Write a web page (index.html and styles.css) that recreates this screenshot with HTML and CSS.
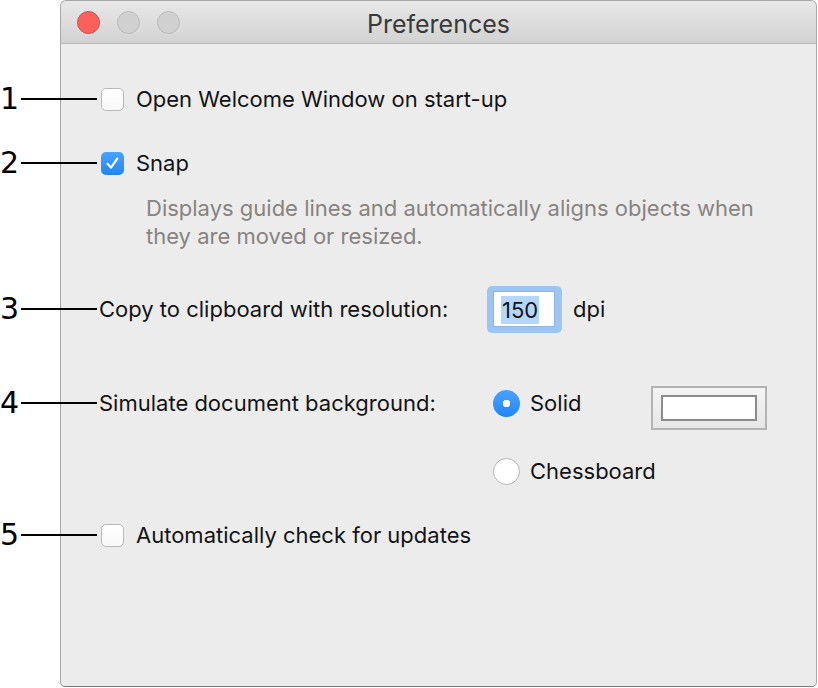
FILE: index.html
```html
<!DOCTYPE html>
<html lang="en">
<head>
  <meta charset="UTF-8">
  <title>Preferences</title>
  <link rel="stylesheet" href="styles.css">
</head>
<body>
  <div class="window">
    <div class="titlebar">
      <div class="lights">
        <span class="light close"></span>
        <span class="light"></span>
        <span class="light"></span>
      </div>
      <div class="title">Preferences</div>
    </div>

    <div class="content">
      <div class="row row-1">
        <div class="callout"><span class="num">1</span><span class="lead"></span></div>
        <span class="checkbox"></span>
        <span class="label">Open Welcome Window on start-up</span>
      </div>

      <div class="row row-2">
        <div class="callout"><span class="num">2</span><span class="lead"></span></div>
        <span class="checkbox checked">
          <svg width="23" height="23" viewBox="0 0 23 23">
            <path d="M6.5 11.8 L10 15.6 L16.3 6.6" fill="none" stroke="#fff" stroke-width="2.2" stroke-linecap="round" stroke-linejoin="round"/>
          </svg>
        </span>
        <span class="label">Snap</span>
      </div>
      <p class="hint">Displays guide lines and automatically aligns objects when they are moved or resized.</p>

      <div class="row row-3">
        <div class="callout"><span class="num">3</span><span class="lead"></span></div>
        <span class="field-label">Copy to clipboard with resolution:</span>
        <span class="focus-ring"><span class="input"><span class="selected">150</span></span></span>
        <span class="unit">dpi</span>
      </div>

      <div class="row row-4">
        <div class="callout"><span class="num">4</span><span class="lead"></span></div>
        <span class="field-label">Simulate document background:</span>
        <div class="radios">
          <div class="radio-row">
            <span class="radio on"></span>
            <span class="label">Solid</span>
          </div>
          <div class="radio-row">
            <span class="radio"></span>
            <span class="label">Chessboard</span>
          </div>
        </div>
        <span class="well"><span class="swatch"></span></span>
      </div>

      <div class="row row-5">
        <div class="callout"><span class="num">5</span><span class="lead"></span></div>
        <span class="checkbox"></span>
        <span class="label">Automatically check for updates</span>
      </div>
    </div>
  </div>
</body>
</html>
```

FILE: styles.css
```css
body {
  margin: 0;
  background-color: #fff;
  font-family: Inter, "Liberation Sans", sans-serif;
  font-size: 22px;
  color: #141414;
}
.window {
  margin-left: 60px;
  width: 757px;
  height: 687px;
  box-sizing: border-box;
  background-color: #ececec;
  border: 1px solid #a8a8a8;
  border-bottom-color: #7a7a7a;
  border-radius: 6px 6px 5px 5px;
}
.titlebar {
  position: relative;
  height: 42px;
  border-bottom: 1px solid #b9b9b9;
  border-radius: 6px 6px 0 0;
  background: linear-gradient(#e9e8e9, #d3d2d3);
  display: flex;
  align-items: center;
  justify-content: center;
}
.lights {
  position: absolute;
  left: 16px;
  top: 10px;
  display: flex;
  gap: 17px;
}
.light {
  width: 21px;
  height: 21px;
  border-radius: 50%;
  background-color: #d0d0d0;
  border: 1px solid #bcbcbc;
}
.light.close {
  background-color: #fc605c;
  border-color: #de4741;
}
.title {
  color: #3a3a3a;
  font-size: 25px;
  margin-top: 4px;
}
.content {
  padding: 39px 0 0 38px;
}
.row {
  position: relative;
  display: flex;
  align-items: center;
  height: 32px;
}
.callout {
  position: absolute;
  left: -99px;
  top: 0;
  width: 97px;
  height: 100%;
  display: flex;
  align-items: center;
  font-family: "DejaVu Sans", sans-serif;
  font-size: 30px;
  color: #000;
}
.num {
  line-height: 1;
}
.lead {
  flex: 1;
  height: 2px;
  margin-left: 2px;
  background-color: #000;
}
.checkbox {
  flex-shrink: 0;
  width: 23px;
  height: 23px;
  box-sizing: border-box;
  margin-left: 2px;
  margin-right: 12px;
  border: 1px solid #b9b9b9;
  border-radius: 5px;
  background: linear-gradient(#fff, #f8f8f8);
}
.checkbox.checked {
  border: none;
  background: linear-gradient(#4aa3fc, #1f86f8);
}
.checkbox svg {
  display: block;
}
.row-2 {
  margin-top: 32px;
}
.hint {
  margin: 15px 0 0 47px;
  width: 640px;
  line-height: 28px;
  color: #878380;
}
.row-3 {
  margin-top: 35px;
  height: 48px;
}
.field-label {
  flex-shrink: 0;
  width: 394px;
}
.row-3 .field-label {
  width: 388px;
}
.focus-ring {
  flex-shrink: 0;
  display: flex;
  padding: 5px 7px 6px 6px;
  border-radius: 5px;
  background-color: #9ac5f4;
}
.input {
  width: 62px;
  height: 36px;
  box-sizing: border-box;
  background-color: #fff;
  border: 1px solid #8fb4e0;
  padding: 4px 0 0 7px;
  line-height: 28px;
}
.selected {
  display: inline-block;
  background-color: #b3d7ff;
  padding: 0 1px;
}
.unit {
  margin-left: 11px;
}
.row-4 {
  margin-top: 54px;
  align-items: flex-start;
  height: auto;
}
.row-4 .field-label {
  line-height: 32px;
}
.row-4 .callout {
  height: 32px;
}
.radios {
  flex-shrink: 0;
  width: 158px;
  display: flex;
  flex-direction: column;
  gap: 36px;
}
.radio-row {
  display: flex;
  align-items: center;
  height: 32px;
}
.radio {
  flex-shrink: 0;
  width: 27px;
  height: 27px;
  box-sizing: border-box;
  border-radius: 50%;
  border: 1px solid #b5b5b5;
  background-color: #fff;
  margin-right: 10px;
}
.radio.on {
  border: none;
  background: radial-gradient(circle, #fff 0 3.5px, transparent 4px), linear-gradient(#4aa3fc, #1f86f8);
}
.well {
  flex-shrink: 0;
  margin-top: -1px;
  width: 116px;
  height: 44px;
  box-sizing: border-box;
  border: 2px solid #b3b3b3;
  background: linear-gradient(#f4f4f4, #e6e6e6);
  display: flex;
  align-items: center;
  justify-content: center;
}
.swatch {
  width: 96px;
  height: 26px;
  box-sizing: border-box;
  border: 2px solid #8c8c8c;
  background-color: #fff;
}
.row-5 {
  margin-top: 32px;
}
```
